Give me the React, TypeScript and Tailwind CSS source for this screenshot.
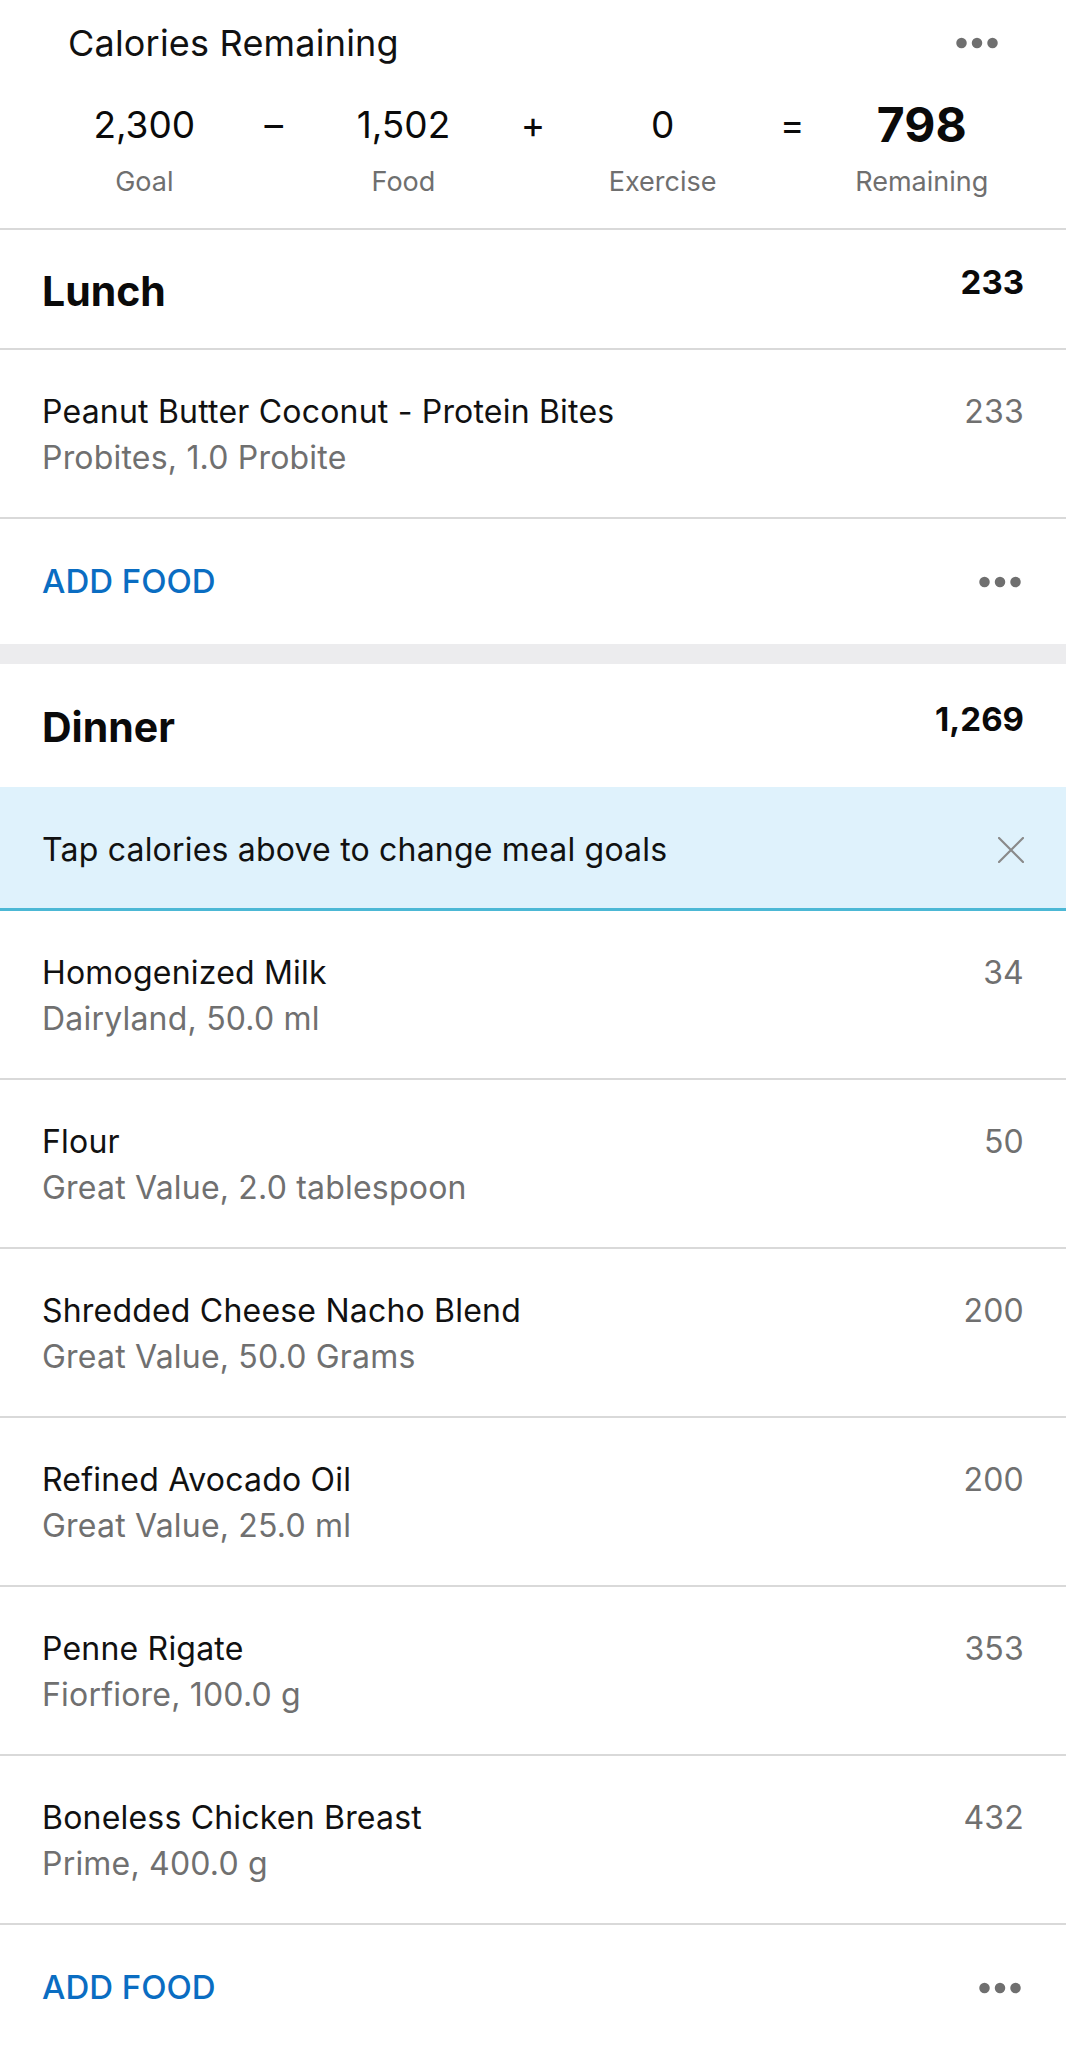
import React from "react";

const Dots = () => (
  <svg width="42" height="12" viewBox="0 0 42 12" className="shrink-0">
    <circle cx="5.5" cy="6" r="5.25" fill="#6f6f6f" />
    <circle cx="21" cy="6" r="5.25" fill="#6f6f6f" />
    <circle cx="36.5" cy="6" r="5.25" fill="#6f6f6f" />
  </svg>
);

type Item = { name: string; sub: string; cal: string };

const FoodRow = ({ item }: { item: Item }) => (
  <div className="h-[169px] border-b-2 border-[#d9d9d9] px-[42px] pt-[44px] flex justify-between">
    <div className="flex flex-col">
      <div className="text-[32px] leading-[36px] tracking-[0.2px] text-[#111111]">{item.name}</div>
      <div className="text-[32px] leading-[36px] tracking-[0.2px] mt-[10px] text-[#707070]">{item.sub}</div>
    </div>
    <div className="text-[32px] leading-[36px] tracking-[0.2px] text-[#707070]">{item.cal}</div>
  </div>
);

const AddFood = () => (
  <div className="h-[125px] px-[42px] flex items-center justify-between">
    <span className="text-[33px] font-medium text-[#0a6dc2]">ADD FOOD</span>
    <span className="mr-[3px]">
      <Dots />
    </span>
  </div>
);

const MealHeader = ({ title, cal, h }: { title: string; cal: string; h: string }) => (
  <div className={`${h} px-[42px] flex items-center justify-between`}>
    <span className="text-[41px] font-bold text-[#0a0a0a] pt-[5px]">{title}</span>
    <span className="text-[33px] font-bold text-[#0a0a0a] mb-[12px]">{cal}</span>
  </div>
);

const dinner: Item[] = [
  { name: "Homogenized Milk", sub: "Dairyland, 50.0 ml", cal: "34" },
  { name: "Flour", sub: "Great Value, 2.0 tablespoon", cal: "50" },
  { name: "Shredded Cheese Nacho Blend", sub: "Great Value, 50.0 Grams", cal: "200" },
  { name: "Refined Avocado Oil", sub: "Great Value, 25.0 ml", cal: "200" },
  { name: "Penne Rigate", sub: "Fiorfiore, 100.0 g", cal: "353" },
  { name: "Boneless Chicken Breast", sub: "Prime, 400.0 g", cal: "432" },
];

const Col = ({ value, label, bold }: { value: string; label?: string; bold?: boolean }) => (
  <div className="flex flex-col items-center">
    <div
      className={`h-[60px] flex items-center ${
        bold ? "text-[48px] font-bold" : "text-[37px]"
      } text-[#0a0a0a]`}
    >
      {value}
    </div>
    <div className="h-[36px] mt-[9px] text-[27px] text-[#6f6f6f] flex items-center">{label ?? ""}</div>
  </div>
);

export default function App() {
  return (
    <div
      className="w-[1066px] min-h-[2048px] bg-white overflow-hidden"
      style={{ fontFamily: "Inter, 'Noto Sans', sans-serif" }}
    >
      {/* Summary */}
      <div className="border-b-2 border-[#d9d9d9] pb-[28px]">
        <div className="h-[86px] pl-[68px] pr-[68px] flex items-center justify-between">
          <span className="text-[36px] tracking-[0.2px] text-[#111111]">Calories Remaining</span>
          <Dots />
        </div>
        <div className="mt-[9px] w-[907px] mx-auto grid grid-cols-7">
          <Col value="2,300" label="Goal" />
          <Col value="–" />
          <Col value="1,502" label="Food" />
          <Col value="+" />
          <Col value="0" label="Exercise" />
          <Col value="=" />
          <Col value="798" label="Remaining" bold />
        </div>
      </div>

      {/* Lunch */}
      <div className="border-b-2 border-[#d9d9d9]">
        <MealHeader title="Lunch" cal="233" h="h-[118px]" />
      </div>
      <FoodRow item={{ name: "Peanut Butter Coconut - Protein Bites", sub: "Probites, 1.0 Probite", cal: "233" }} />
      <AddFood />
      <div className="h-[20px] bg-[#ececee]" />

      {/* Dinner */}
      <MealHeader title="Dinner" cal="1,269" h="h-[123px]" />
      <div className="h-[124px] bg-[#dff2fc] border-b-[3px] border-[#4cb8d5] pt-[5px] px-[42px] flex items-center justify-between">
        <span className="text-[32px] tracking-[0.2px] text-[#111111]">Tap calories above to change meal goals</span>
        <svg width="26" height="26" viewBox="0 0 26 26">
          <path d="M1 1 L25 25 M25 1 L1 25" stroke="#8a8a8a" strokeWidth="2.2" strokeLinecap="round" />
        </svg>
      </div>
      {dinner.map((it) => (
        <FoodRow key={it.name} item={it} />
      ))}
      <AddFood />
    </div>
  );
}
